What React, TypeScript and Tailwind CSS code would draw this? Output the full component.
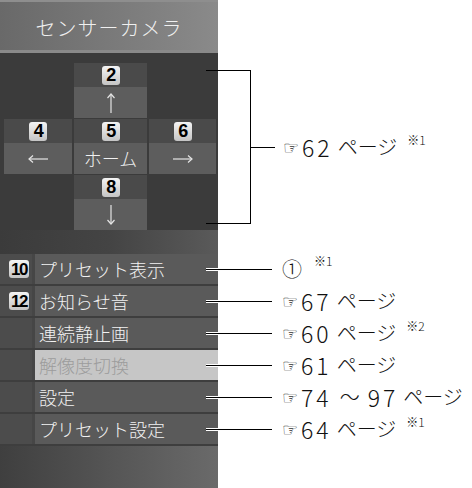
import React from "react";

const Badge = ({ n, w = 18, h = 19, size = 18 }: { n: string; w?: number; h?: number; size?: number }) => (
  <div
    className="flex items-center justify-center rounded-[3px] bg-gradient-to-b from-[#f4f4f4] to-[#c4c4c4] text-black font-bold font-['Liberation_Sans',sans-serif] leading-none tracking-[-1.5px]"
    style={{ width: w, height: h, fontSize: size }}
  >
    {n}
  </div>
);

const Arrow = ({ dir }: { dir: "up" | "down" | "left" | "right" }) => {
  if (dir === "up" || dir === "down") {
    return (
      <svg width="10" height="22" viewBox="0 0 10 22" className="text-[#e4e4e4]">
        <g stroke="currentColor" strokeWidth="1.2" fill="none">
          {dir === "up" ? (
            <>
              <line x1="5" y1="2" x2="5" y2="21" />
              <polyline points="1.5,6 5,2 8.5,6" />
            </>
          ) : (
            <>
              <line x1="5" y1="1" x2="5" y2="20" />
              <polyline points="1.5,16 5,20 8.5,16" />
            </>
          )}
        </g>
      </svg>
    );
  }
  return (
    <svg width="22" height="10" viewBox="0 0 22 10" className="text-[#e4e4e4]">
      <g stroke="currentColor" strokeWidth="1.2" fill="none">
        {dir === "left" ? (
          <>
            <line x1="2" y1="5" x2="21" y2="5" />
            <polyline points="6,1.5 2,5 6,8.5" />
          </>
        ) : (
          <>
            <line x1="1" y1="5" x2="20" y2="5" />
            <polyline points="16,1.5 20,5 16,8.5" />
          </>
        )}
      </g>
    </svg>
  );
};

const Cell = ({ n, children }: { n: string; children: React.ReactNode }) => (
  <div className="flex flex-col">
    <div className="h-[24px] bg-[#4a4a4a] flex items-center justify-center">
      <Badge n={n} />
    </div>
    <div className="h-[31px] bg-[#5d5d5d] flex items-center justify-center">{children}</div>
  </div>
);

const MenuRow = ({
  badge,
  label,
  disabled,
}: {
  badge?: string;
  label: string;
  disabled?: boolean;
}) => (
  <div className="h-[32px] flex border-b-2 border-[#3e3e3e]">
    <div className="w-[32px] bg-[#4c4c4c] flex items-center pl-[9px]">
      {badge && <Badge n={badge} w={20} h={18} size={17} />}
    </div>
    <div className="w-[3px] bg-[#464646]" />
    <div
      className={
        disabled
          ? "flex-1 bg-[#c6c6c6] text-[#9c9c9c] flex items-center pl-[4px] text-[18px] font-light"
          : "flex-1 bg-[#5a5a5a] text-[#f2f2f2] flex items-center pl-[4px] text-[18px] font-light"
      }
    >
      {label}
    </div>
  </div>
);

const Leader = () => (
  <div className="flex w-[66px] items-center">
    <div className="w-[12px] h-px bg-black shadow-[0_-1px_0_#ffffff,0_1px_0_#ffffff]" />
    <div className="flex-1 h-px bg-black" />
  </div>
);

const Hand = () => (
  <span className="font-['DejaVu_Sans',sans-serif] text-[18px] leading-none text-[#333] mr-[3px] relative top-[1px]">☞</span>
);

const Ref = ({ num, note }: { num: string; note?: string }) => (
  <div className="flex items-center text-[#111] font-light">
    <Hand />
    <span className="text-[23px] leading-none tracking-[3px]">{num}</span>
    <span className="text-[20px] leading-none ml-[5px]">ページ</span>
    {note && (
      <span className="text-[12px] leading-none self-start ml-[10px] -mt-[2px]">{note}</span>
    )}
  </div>
);

const RefRow = ({ children }: { children: React.ReactNode }) => (
  <div className="h-[32px] flex items-center">
    <Leader />
    <div className="ml-[10px]">{children}</div>
  </div>
);

export default function App() {
  return (
    <div className="w-[472px] h-[488px] bg-white flex overflow-hidden font-['Noto_Sans_CJK_JP',sans-serif]">
      {/* Panel */}
      <div className="w-[218px] h-[488px] flex flex-col bg-[#3b3b3b] shrink-0">
        <div className="h-[53px] border-t-2 border-[#8e8e8e] border-b-[3px] border-b-[#8a8a8a] bg-gradient-to-r from-[#696969] to-[#8a8a8a] flex items-center justify-center pt-[3px]">
          <span className="text-[20px] tracking-[1px] text-[#f0f0f0] font-light">センサーカメラ</span>
        </div>
        <div className="pt-[10px] pl-[4px] grid grid-cols-[68px_73px_67px] gap-x-[2px] gap-y-px">
          <div />
          <Cell n="2">
            <Arrow dir="up" />
          </Cell>
          <div />
          <Cell n="4">
            <Arrow dir="left" />
          </Cell>
          <Cell n="5">
            <span className="text-[18px] text-[#f0f0f0] font-light">ホーム</span>
          </Cell>
          <Cell n="6">
            <Arrow dir="right" />
          </Cell>
          <div />
          <Cell n="8">
            <Arrow dir="down" />
          </Cell>
          <div />
        </div>
        <div className="h-[24px] bg-gradient-to-r from-[#3b3b3b] via-[#444444] to-[#5a5a5a]" />
        <MenuRow badge="10" label="プリセット表示" />
        <MenuRow badge="12" label="お知らせ音" />
        <MenuRow label="連続静止画" />
        <MenuRow label="解像度切換" disabled />
        <MenuRow label="設定" />
        <MenuRow label="プリセット設定" />
        <div className="flex-1 bg-gradient-to-r from-[#3f3f3f] via-[#555555] to-[#6a6a6a]" />
      </div>

      {/* Annotations */}
      <div className="-ml-[12px] flex flex-col relative z-10 whitespace-nowrap">
        <div className="mt-[70px] h-[154px] flex items-center">
          <div className="w-[45px] h-[154px] border-y border-r border-black" />
          <div className="w-[24px] h-px bg-black" />
          <div className="ml-[8px]">
            <Ref num="62" note="※1" />
          </div>
        </div>
        <div className="h-[29px]" />
        <RefRow>
          <div className="flex items-center text-[#111] font-light">
            <span className="text-[20px] leading-none">①</span>
            <span className="text-[12px] leading-none self-start ml-[12px] -mt-[4px]">※1</span>
          </div>
        </RefRow>
        <RefRow>
          <Ref num="67" />
        </RefRow>
        <RefRow>
          <Ref num="60" note="※2" />
        </RefRow>
        <RefRow>
          <Ref num="61" />
        </RefRow>
        <RefRow>
          <div className="flex items-center text-[#111] font-light">
            <Hand />
            <span className="text-[23px] leading-none tracking-[3px]">74</span>
            <span className="text-[20px] leading-none mx-[8px]">～</span>
            <span className="text-[23px] leading-none tracking-[3px]">97</span>
            <span className="text-[20px] leading-none ml-[5px]">ページ</span>
          </div>
        </RefRow>
        <RefRow>
          <Ref num="64" note="※1" />
        </RefRow>
      </div>
    </div>
  );
}
